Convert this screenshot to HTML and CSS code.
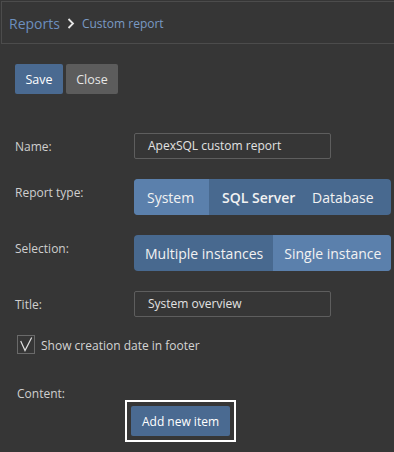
FILE: index.html
```html
<!DOCTYPE html>
<html lang="en">
<head>
  <meta charset="UTF-8">
  <title>Custom report</title>
  <link rel="stylesheet" href="styles.css">
</head>
<body>
  <div class="header">
    <span class="crumb-root">Reports</span>
    <svg class="crumb-sep" width="8" height="11" viewBox="0 0 8 11"><path d="M1.5 1 L6 5.5 L1.5 10" fill="none" stroke="#e6e6e6" stroke-width="1.8"/></svg>
    <span class="crumb-current">Custom report</span>
  </div>

  <div class="page">
    <div class="toolbar">
      <button class="btn btn-primary">Save</button>
      <button class="btn btn-secondary">Close</button>
    </div>

    <div class="row row-name">
      <label class="field-label">Name:</label>
      <div class="text-input">ApexSQL custom report</div>
    </div>

    <div class="row">
      <label class="field-label">Report type:</label>
      <div class="segmented">
        <span class="seg seg-active seg-system">System</span>
        <span class="seg seg-sql">SQL Server</span>
        <span class="seg seg-db">Database</span>
      </div>
    </div>

    <div class="row">
      <label class="field-label">Selection:</label>
      <div class="segmented">
        <span class="seg seg-sel">Multiple instances</span>
        <span class="seg seg-sel seg-active seg-fill">Single instance</span>
      </div>
    </div>

    <div class="row">
      <label class="field-label">Title:</label>
      <div class="text-input">System overview</div>
    </div>

    <div class="check-row">
      <span class="checkbox">
        <svg width="18" height="19" viewBox="0 0 18 19"><path d="M3.7 6 L8 15.5 L14.7 2.5" fill="none" stroke="#e0e0e0" stroke-width="1.2"/></svg>
      </span>
      <span class="check-label">Show creation date in footer</span>
    </div>

    <div class="content-label">Content:</div>
    <div class="add-wrap">
      <button class="btn btn-primary btn-add">Add new item</button>
    </div>
  </div>
</body>
</html>
```

FILE: styles.css
```css
body {
  margin: 0;
  background-color: #363636;
  font-family: 'Open Sans', sans-serif;
  color: #d2d2d2;
  overflow: hidden;
}

.header {
  margin: 1px 0 0 1px;
  height: 41px;
  border: 1px solid #4c4c4c;
  border-right: none;
  display: flex;
  align-items: center;
  padding-left: 7px;
}

.crumb-root {
  font-size: 14px;
  color: #6c8fbe;
  margin-top: 1px;
}

.crumb-sep {
  margin: 2px 7px 0 7px;
}

.crumb-current {
  font-size: 12px;
  color: #7a9ac4;
  margin-top: 2px;
}

.page {
  padding: 0 0 0 15px;
}

.toolbar {
  display: flex;
  gap: 3px;
  margin-top: 20px;
}

.btn {
  font-family: 'Open Sans', sans-serif;
  font-size: 12.5px;
  color: #ffffff;
  border: none;
  border-radius: 2px;
  height: 30px;
  padding: 0;
}

.btn-primary {
  background-color: #4a6a91;
  width: 48px;
}

.btn-secondary {
  background-color: #5c5c5c;
  color: #e6e6e6;
  width: 52px;
}

.row {
  display: flex;
  align-items: flex-start;
  margin-top: 20px;
}

.row-name {
  margin-top: 39px;
}

.field-label {
  flex-shrink: 0;
  width: 119px;
  padding-top: 6px;
  line-height: 16px;
  font-size: 12px;
  color: #cfcfcf;
}

.text-input {
  width: 182px;
  height: 24px;
  border: 1px solid #5e5e5e;
  border-radius: 2px;
  padding-left: 13px;
  font-size: 12px;
  line-height: 24px;
  color: #e2e2e2;
}

.segmented {
  flex-shrink: 0;
  display: flex;
  width: 257px;
  height: 36px;
  border-radius: 4px;
  overflow: hidden;
  background-color: #48698f;
}

.seg {
  display: flex;
  align-items: center;
  font-size: 14px;
  color: #f2f2f2;
  white-space: nowrap;
}

.seg-active {
  background-color: #5b80ac;
}

.seg-system {
  width: 75px;
  padding-left: 13px;
  box-sizing: border-box;
}

.seg-sql {
  font-weight: 600;
  padding-left: 13px;
  width: 95px;
  box-sizing: border-box;
}

.seg-db {
  padding-left: 8px;
}

.seg-sel {
  padding: 0 10px 0 11px;
}

.seg-fill {
  flex: 1;
}

.check-row {
  display: flex;
  align-items: center;
  margin-top: 18px;
  padding-left: 2px;
}

.checkbox {
  width: 16px;
  height: 17px;
  border: 1px solid #6a6a6a;
  display: block;
  position: relative;
}

.checkbox svg {
  position: absolute;
  left: -1px;
  top: -1px;
}

.check-label {
  margin: 2px 0 0 6px;
  font-size: 12px;
  color: #d4d4d4;
}

.content-label {
  margin-top: 32px;
  padding-left: 2px;
  line-height: 16px;
  font-size: 12px;
  color: #cfcfcf;
}

.add-wrap {
  margin: -2px 0 0 110px;
  width: 99px;
  padding: 4px;
  border: 2px solid #ffffff;
}

.btn-add {
  display: block;
  width: 99px;
  font-size: 12px;
}
```
